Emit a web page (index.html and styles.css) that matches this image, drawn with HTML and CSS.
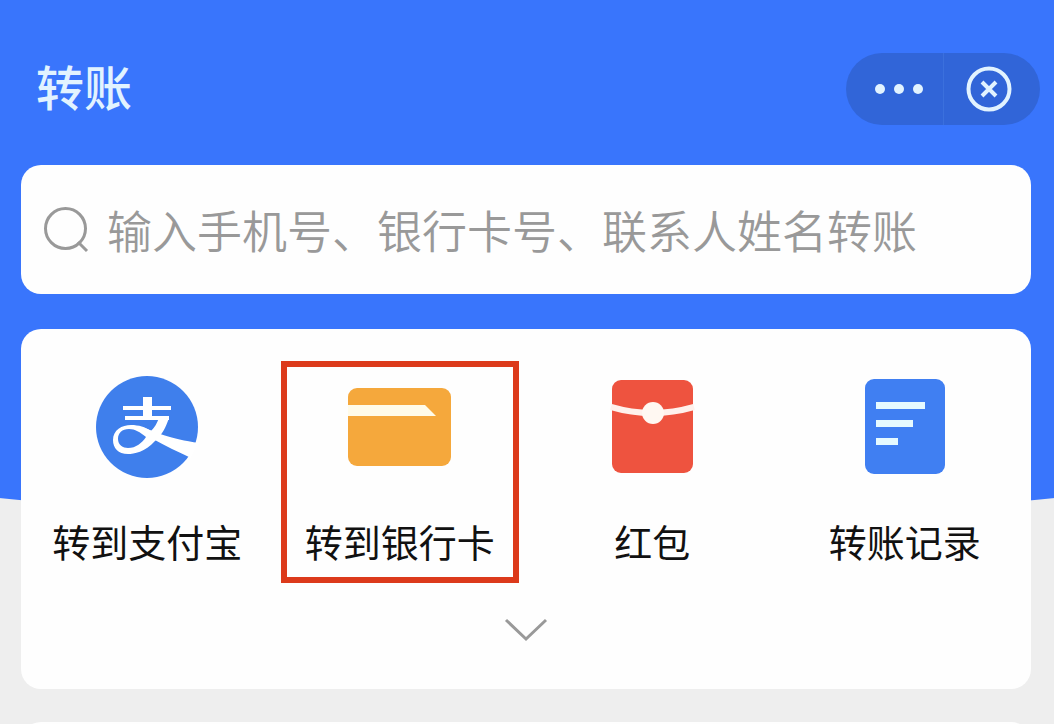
FILE: index.html
```html
<!DOCTYPE html>
<html lang="zh-CN">
<head>
    <meta charset="UTF-8">
    <meta name="viewport" content="width=device-width, initial-scale=1.0">
    <title>转账</title>
    <link rel="stylesheet" href="styles.css">
</head>
<body>

    <header class="header">
        <h1 class="title">转账</h1>
        <div class="capsule">
            <button class="capsule-btn" type="button" aria-label="更多">
                <svg width="50" height="12" viewBox="0 0 50 12" fill="#e2f3ff">
                    <circle cx="7" cy="6" r="5"/>
                    <circle cx="26" cy="6" r="5"/>
                    <circle cx="45" cy="6" r="5"/>
                </svg>
            </button>
            <button class="capsule-btn" type="button" aria-label="关闭">
                <svg width="48" height="46" viewBox="0 0 48 46" fill="none" stroke="#e2f3ff">
                    <circle cx="25" cy="23" r="20.5" stroke-width="4"/>
                    <path d="M18 16L32 30M32 16L18 30" stroke-width="4"/>
                </svg>
            </button>
        </div>
    </header>

    <main class="main">
        <label class="search">
            <svg width="48" height="48" viewBox="0 0 48 48" fill="none" stroke="#999" stroke-width="3">
                <circle cx="22.5" cy="22.5" r="20"/>
                <path d="M35 36L44 45"/>
            </svg>
            <input class="search-input" type="text" aria-label="搜索收款人" placeholder="输入手机号、银行卡号、联系人姓名转账">
        </label>

        <section class="card">
            <nav class="menu">
                <a class="menu-item" href="#">
                    <svg width="104" height="104" viewBox="0 0 104 104">
                        <circle cx="52" cy="52" r="51" fill="#3f7fec"/>
                        <g fill="#fff">
                            <path d="M48 22H57V43H48Z"/>
                            <path d="M28 31H76V35H28Z"/>
                            <path d="M30 41H74V45H30Z"/>
                            <path fill-rule="evenodd" d="M64 43L74 43C71 52 67 60 60 66C50 77 39 79 33 79C23 79 18 73 18 65C18 55 27 50 36 50C44 50 50 52 56 56C60 52 62 48 64 43ZM51 62C45 57 40 54 34 54C27 54 23 58 23 64C23 70 28 73 33 73C41 73 47 68 51 62Z"/>
                            <path d="M50 53C60 57 75 64 104 68L96 83C84 77 70 71 58 64Z"/>
                        </g>
                    </svg>
                    <span class="menu-text">转到支付宝</span>
                </a>
                <a class="menu-item active" href="#">
                    <svg width="104" height="104" viewBox="0 0 104 104">
                        <rect y="13" width="103" height="78" rx="9" fill="#f5a83c"/>
                        <path d="M0 30H77L88 41H0Z" fill="#fffbe9"/>
                    </svg>
                    <span class="menu-text">转到银行卡</span>
                </a>
                <a class="menu-item" href="#">
                    <svg width="104" height="104" viewBox="0 0 104 104">
                        <rect x="12" y="5" width="81" height="93" rx="9" fill="#ee533f"/>
                        <path d="M11 32Q52 44 94 32" fill="none" stroke="#fff1ec" stroke-width="6"/>
                        <circle cx="53" cy="38" r="11" fill="#fff8f2"/>
                    </svg>
                    <span class="menu-text">红包</span>
                </a>
                <a class="menu-item" href="#">
                    <svg width="104" height="104" viewBox="0 0 104 104">
                        <rect x="12" y="4" width="80" height="95" rx="9" fill="#407ff2"/>
                        <path d="M23 27H72V34H23ZM23 45H60V52H23ZM23 63H45V70H23Z" fill="#e6faff"/>
                    </svg>
                    <span class="menu-text">转账记录</span>
                </a>
            </nav>
            <button class="more" type="button" aria-label="展开">
                <svg width="44" height="26" viewBox="0 0 44 26" fill="none" stroke="#999" stroke-width="3">
                    <path d="M2 3L22 22L42 3"/>
                </svg>
            </button>
        </section>

        <section class="card next"></section>
    </main>

</body>
</html>
```
FILE: styles.css
```css
* {
    box-sizing: border-box;
}

html {
    height: 100%;
}

body {
    margin: 0;
    height: 100%;
    overflow: hidden;
    font-family: "Noto Sans CJK SC", sans-serif;
    /* 蓝色背景底部是一条很平的弧线 */
    background: radial-gradient(circle 5300px at 50% -4746px, #3975fc 5270px, #eee 5271px) no-repeat #eee;
}

.header {
    display: flex;
    align-items: flex-start;
    justify-content: space-between;
    padding: 53px 14px 40px 36px;
}

.title {
    margin: 0;
    font-size: 48px;
    line-height: 64px;
    font-weight: 500;
    color: #e2f3ff;
}

.capsule {
    display: flex;
    width: 194px;
    height: 72px;
    border-radius: 36px;
    background: #3165d8;
}

.capsule-btn {
    flex: 1;
    display: flex;
    align-items: center;
    justify-content: center;
    padding: 0 0 0 8px;
    border: 0;
    background: none;
}

.capsule-btn + .capsule-btn {
    padding: 0 8px 0 0;
    border-left: 1px solid #3b70dd;
}

.main {
    padding: 0 23px 0 21px;
}

.search {
    display: flex;
    align-items: center;
    gap: 16px;
    height: 129px;
    margin-bottom: 35px;
    padding: 0 22px;
    border-radius: 20px;
    background: #fefefe;
}

.search-input {
    flex: 1;
    min-width: 0;
    height: 68px;
    padding: 0;
    border: 0;
    outline: 0;
    background: none;
    font-family: "Noto Sans CJK SC DemiLight", "Noto Sans CJK SC", sans-serif;
    font-size: 45px;
    font-weight: 350;
    color: #333;
}

.search-input::placeholder {
    color: #999;
}

.card {
    padding: 32px 0 46px;
    border-radius: 20px;
    background: #fefefe;
}

.menu {
    display: grid;
    grid-template-columns: repeat(4, 1fr);
}

.menu-item {
    display: flex;
    flex-direction: column;
    align-items: center;
    gap: 40px;
    margin: 0 7px;
    padding: 8px 0 14px;
    border: 6px solid transparent;
    color: #111;
    text-decoration: none;
}

.menu-item.active {
    border-color: #dc3a1b;
}

.menu-text {
    font-size: 38px;
    line-height: 44px;
    white-space: nowrap;
}

.more {
    display: block;
    margin: 34px auto 0;
    padding: 0;
    border: 0;
    background: none;
}

.more svg {
    display: block;
}

.next {
    margin-top: 33px;
}
```
